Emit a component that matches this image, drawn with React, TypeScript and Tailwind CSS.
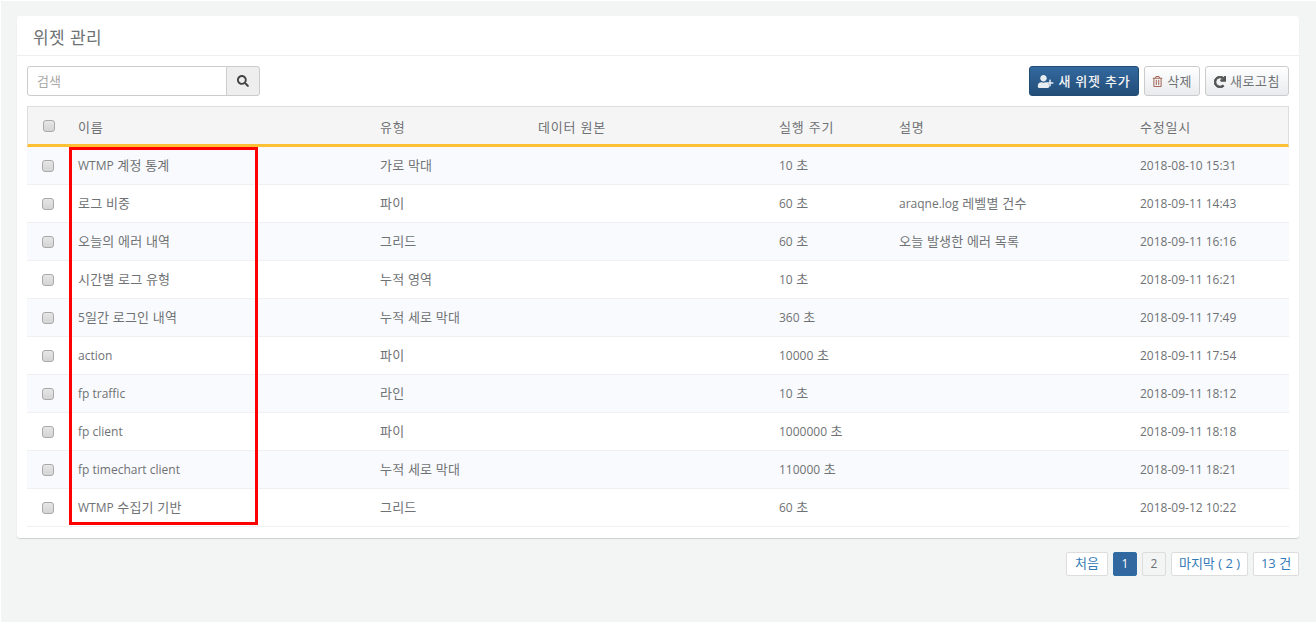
import { FaPlus, FaRedo, FaRegTrashAlt, FaSearch, FaUser } from "react-icons/fa";

const FONT = "font-['Open_Sans','Noto_Sans_CJK_KR',sans-serif]";

const rows = [
  { name: "WTMP 계정 통계", type: "가로 막대", cycle: "10 초", desc: "", date: "2018-08-10 15:31" },
  { name: "로그 비중", type: "파이", cycle: "60 초", desc: "araqne.log 레벨별 건수", date: "2018-09-11 14:43" },
  { name: "오늘의 에러 내역", type: "그리드", cycle: "60 초", desc: "오늘 발생한 에러 목록", date: "2018-09-11 16:16" },
  { name: "시간별 로그 유형", type: "누적 영역", cycle: "10 초", desc: "", date: "2018-09-11 16:21" },
  { name: "5일간 로그인 내역", type: "누적 세로 막대", cycle: "360 초", desc: "", date: "2018-09-11 17:49" },
  { name: "action", type: "파이", cycle: "10000 초", desc: "", date: "2018-09-11 17:54" },
  { name: "fp traffic", type: "라인", cycle: "10 초", desc: "", date: "2018-09-11 18:12" },
  { name: "fp client", type: "파이", cycle: "1000000 초", desc: "", date: "2018-09-11 18:18" },
  { name: "fp timechart client", type: "누적 세로 막대", cycle: "110000 초", desc: "", date: "2018-09-11 18:21" },
  { name: "WTMP 수집기 기반", type: "그리드", cycle: "60 초", desc: "", date: "2018-09-12 10:22" },
];

const headers = ["이름", "유형", "데이터 원본", "실행 주기", "설명", "수정일시"];

// hangul runs are set a size up from the latin text
function Ko({ text }: { text: string }) {
  return (
    <>
      {text.split(/([가-힣 ]*[가-힣][가-힣 ]*)/).map((part, i) =>
        /[가-힣]/.test(part) ? (
          <span key={i} className="text-[13px] tracking-[0.2px]">{part}</span>
        ) : (
          part
        ),
      )}
    </>
  );
}

function Checkbox() {
  return (
    <span className="block w-3 h-3 rounded-[3px] border border-[#a9a9a9] bg-gradient-to-b from-[#e6e6e6] to-[#d4d4d4]" />
  );
}

export default function App() {
  return (
    <div className={`${FONT} min-h-[622px] bg-[#f3f4f4] border-l border-t border-white pl-4 pr-[17px] pt-[15px] text-xs text-[#6f7274]`}>
      <div className="relative bg-white rounded-[3px] shadow-[0_1px_1px_rgba(0,0,0,0.15)] h-[522px]">
        <div className="h-10 border-b border-[#eeeeee] pl-4 pt-[6px] flex items-center">
          <h1 className="text-[17px] font-normal tracking-[0.4px]">위젯 관리</h1>
        </div>

        <div className="flex justify-between px-[10px] pt-[10px] h-[50px]">
          <div className="flex h-[30px]">
            <input
              placeholder="검색"
              className="w-[200px] h-[30px] border border-[#cccccc] rounded-l-[3px] px-[9px] text-[13px] outline-none placeholder:text-[#a9a9a9]"
            />
            <button className="w-[34px] h-[30px] -ml-px border border-[#cccccc] rounded-r-[3px] bg-[#eeeeee] flex items-center justify-center text-[#444444]">
              <FaSearch size={12} />
            </button>
          </div>
          <div className="flex gap-[5px] h-[30px] text-[13px]">
            <button className="w-[110px] pt-px rounded-[3px] border border-[#204d74] bg-gradient-to-b from-[#33699f] to-[#234d78] text-[#f5f5f5] flex items-center justify-center gap-1 font-medium tracking-[0.8px]">
              <span className="relative w-[17px] h-3 text-[#e8edf2]">
                <FaUser size={13} className="absolute left-0 -top-px" />
                <FaPlus size={8} className="absolute right-0 top-[3px]" />
              </span>
              새 위젯 추가
            </button>
            <button className="w-[56px] pt-px rounded-[3px] border border-[#cccccc] bg-gradient-to-b from-white to-[#e8ebed] flex items-center justify-center gap-1 tracking-[0.4px]">
              <FaRegTrashAlt size={11} className="text-[#a5685a]" />
              삭제
            </button>
            <button className="w-[84px] pt-px rounded-[3px] border border-[#cccccc] bg-gradient-to-b from-white to-[#e8ebed] flex items-center justify-center gap-1 tracking-[0.6px]">
              <FaRedo size={12} className="text-[#555555] stroke-current stroke-[40px]" />
              새로고침
            </button>
          </div>
        </div>

        <div className="px-[10px]">
          <table className="w-[1262px] table-fixed border-separate border-spacing-0">
            <colgroup>
              <col className="w-[41px]" />
              <col className="w-[302px]" />
              <col className="w-[158px]" />
              <col className="w-[241px]" />
              <col className="w-[120px]" />
              <col className="w-[241px]" />
              <col className="w-[159px]" />
            </colgroup>
            <thead>
              <tr className="h-[41px] bg-[#f5f5f6]">
                <th className="pl-[15px] border-t border-l border-[#dddddd] border-b-[3px] border-b-[#ffc133]"><Checkbox /></th>
                {headers.map((label, i) => (
                  <th
                    key={label}
                    className={`pl-[10px] pt-[5px] text-left text-[13px] font-normal tracking-[0.8px] border-t border-[#dddddd] border-b-[3px] border-b-[#ffc133] ${i === headers.length - 1 ? "border-r" : ""}`}
                  >
                    {label}
                  </th>
                ))}
              </tr>
            </thead>
            <tbody>
              {rows.map((row, i) => (
                <tr key={row.name} className={`h-[38px] ${i % 2 === 0 ? "bg-[#f9fafd]" : "bg-white"}`}>
                  <td className="pl-[15px] border-b border-[#f0f0f2]"><Checkbox /></td>
                  <td className="pl-[10px] border-b border-[#f0f0f2]"><Ko text={row.name} /></td>
                  <td className="pl-[10px] border-b border-[#f0f0f2]"><Ko text={row.type} /></td>
                  <td className="border-b border-[#f0f0f2]" />
                  <td className="pl-[10px] border-b border-[#f0f0f2]"><Ko text={row.cycle} /></td>
                  <td className="pl-[10px] border-b border-[#f0f0f2]"><Ko text={row.desc} /></td>
                  <td className="pl-[10px] border-b border-[#f0f0f2]">{row.date}</td>
                </tr>
              ))}
            </tbody>
          </table>
        </div>

        {/* red highlight drawn over the name column */}
        <div className="absolute left-[52px] top-[131px] w-[189px] h-[378px] border-[3px] border-[#ff0000]" />
      </div>

      <div className="flex justify-end gap-[5px] mt-[14px] text-[13px]">
        <a className="h-6 w-[42px] flex items-center justify-center bg-white border border-[#dddddd] rounded-[2px] text-[#337ab7]">처음</a>
        <a className="h-6 w-6 flex items-center justify-center bg-[#31689f] border border-[#2e6da4] rounded-[2px] text-white text-xs">1</a>
        <a className="h-6 w-6 flex items-center justify-center bg-[#f3f4f4] border border-[#dddddd] rounded-[2px] text-xs">2</a>
        <a className="h-6 w-[77px] flex items-center justify-center bg-white border border-[#dddddd] rounded-[2px] text-[#337ab7]">마지막 ( 2 )</a>
        <a className="h-6 w-[46px] flex items-center justify-center bg-white border border-[#dddddd] rounded-[2px] text-[#337ab7]">13 건</a>
      </div>
    </div>
  );
}
